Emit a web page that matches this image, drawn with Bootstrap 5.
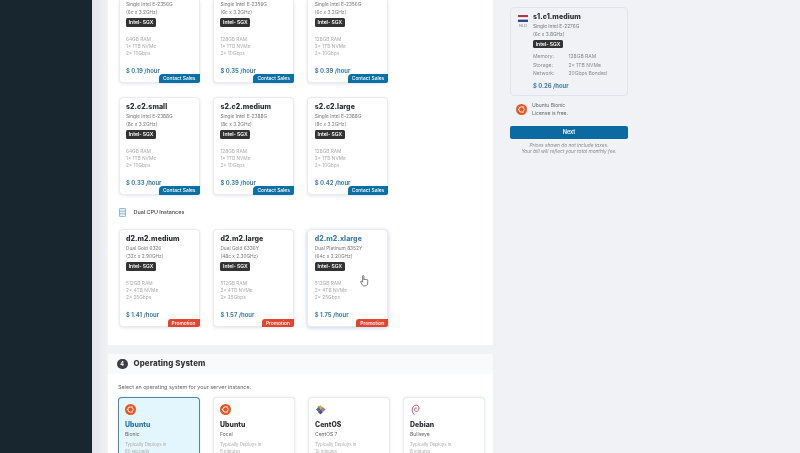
<!DOCTYPE html>
<html lang="en">
<head>
    <meta charset="UTF-8">
    <meta name="viewport" content="width=device-width, initial-scale=1.0">
    <title>Deploy Server</title>
    <link href="https://cdn.jsdelivr.net/npm/bootstrap@5.3.2/dist/css/bootstrap.min.css" rel="stylesheet">
    <style>
        html, body { height: 453px; overflow: hidden; }
        body { background: #f0f2f6; font-family: Inter, "Liberation Sans", sans-serif; font-size: 5px; color: #666; }
        .page-wrap { height: 453px; filter: blur(.45px); }
        .side-bar { width: 92px; background: #17262f; }
        .main-col { width: 401px; padding-left: 16px; background: linear-gradient(90deg, #e3e5ea, #f0f2f6 16px); }
        .white-panel { background: #fff; padding: 0 0 18px 10.5px; }
        .plan-grid { display: grid; grid-template-columns: repeat(3, 81px); column-gap: 13.4px; }
        .plan-grid-next { margin-top: 14px; }
        .plan-box { position: relative; height: 98px; padding: 4px 6.5px 0; background: #fff; border: 1px solid #e9ebef; border-radius: 4px; box-shadow: 0 1px 3px rgba(40, 50, 70, .12); }
        .plan-box.cut-top { height: 83px; padding-top: 0; border-top: 0; border-radius: 0 0 4px 4px; }
        .plan-box.hovered { box-shadow: 0 1px 4px rgba(40, 90, 170, .28); }
        .plan-box.hovered .plan-name { color: #3f7ea3; }
        .plan-name { font-size: 7px; font-weight: 800; line-height: 10px; color: #2b2d30; letter-spacing: .05px; white-space: nowrap; }
        .cpu-line { font-size: 4.8px; line-height: 8px; color: #777; white-space: nowrap; }
        .sgx-tag { display: block; width: 30px; height: 8.5px; padding: 0; margin-top: 2px; background: #333; border-radius: 1.5px; color: #fff; font-size: 5px; font-weight: 600; line-height: 8.5px; }
        .spec-list { margin-top: 9px; font-size: 4.8px; line-height: 7px; color: #aaa; white-space: nowrap; }
        .price-line { margin-top: 9px; font-size: 5.9px; font-weight: 700; line-height: 10px; color: #3f7ea3; white-space: nowrap; }
        .corner-tag { position: absolute; right: -1px; bottom: -1px; height: 9px; padding: 0 4px; border-radius: 4px 0 2px 0; color: #fff; font-size: 4.9px; font-weight: 500; line-height: 9px; }
        .tag-sales { width: 40.5px; background: #0a6fa5; }
        .tag-promo { width: 32px; height: 8px; line-height: 8px; background: #e0452f; border-radius: 3px 0 2px 0; }
        .group-head { height: 9px; margin: 12.5px 0 12.5px; font-size: 5.4px; font-weight: 500; color: #444; line-height: 9px; }
        .hand-cursor { position: absolute; left: 52px; top: 45px; }
        .os-panel { margin-top: 9px; background: #fff; height: 99px; }
        .os-head { height: 20px; padding-left: 9px; background: #f8fafc; font-size: 7.9px; font-weight: 800; color: #333; letter-spacing: .1px; }
        .step-dot { width: 10.5px; height: 10.5px; margin-right: 6px; border-radius: 50%; background: #3c3f43; color: #fff; font-size: 5.5px; font-weight: 700; }
        .os-hint { margin: 8.5px 0 6.5px 10px; font-size: 5.4px; line-height: 8px; color: #666; }
        .os-grid { display: grid; grid-template-columns: repeat(4, 82px); column-gap: 13px; margin-left: 9.5px; }
        .os-box { height: 70px; padding: 6px 6.5px 0; background: #fff; border: 1px solid #e9ebef; border-bottom: 0; border-radius: 4px 4px 0 0; box-shadow: 0 0 3px rgba(40, 50, 70, .1); }
        .os-box.chosen { background: #e3f5fd; border: 1px solid #4a88a6; border-bottom: 0; }
        .os-box.chosen .os-name { color: #2b77a3; }
        .os-logo { display: block; width: 11px; height: 11px; }
        .os-name { margin-top: 4.5px; font-size: 6.9px; font-weight: 800; line-height: 10px; color: #2b2d30; letter-spacing: .05px; }
        .os-ver { font-size: 5px; line-height: 8px; color: #666; }
        .os-time { margin-top: 3.5px; font-size: 4.4px; line-height: 7px; color: #aaa; }
        .side-col { padding: 7px 0 0 17px; }
        .sum-wrap { width: 118px; }
        .sum-card { height: 89px; padding: 3.5px 0 0 7px; background: #f0f2f6; border: 1px solid #e1e4ea; border-radius: 4px; }
        .flag-col { width: 15px; padding-top: 3.5px; }
        .nl-flag { display: block; width: 10px; height: 7px; }
        .nl-code { width: 10px; margin-top: .5px; font-size: 4px; line-height: 6px; text-align: center; color: #888; }
        .sum-name { font-size: 7px; font-weight: 800; line-height: 10px; color: #2b2d30; letter-spacing: .05px; white-space: nowrap; }
        .sum-specs { margin-top: 4px; font-size: 5px; line-height: 8.5px; color: #888; white-space: nowrap; }
        .sum-key { display: inline-block; width: 35.5px; }
        .sum-price { margin-top: 3px; font-size: 5.9px; font-weight: 700; line-height: 10px; color: #3f7ea3; white-space: nowrap; }
        .lic-row { margin-top: 4.5px; padding-left: 6px; font-size: 5px; line-height: 8.5px; color: #666; }
        .lic-logo { width: 11px; height: 11px; margin-right: 5px; }
        .next-btn { display: block; width: 100%; height: 13.5px; margin-top: 8px; padding: 0; background: #0a6aa1; border: 0; border-radius: 2px; color: #fff; font-size: 5.6px; font-weight: 600; line-height: 13.5px; }
        .fine-print { margin-top: 2.5px; font-size: 4.8px; font-style: italic; line-height: 6.5px; color: #888; text-align: center; white-space: nowrap; }
    </style>
</head>
<body>
    <svg width="0" height="0" class="d-block">
        <symbol id="ubuntu" viewBox="0 0 22 22">
            <circle cx="11" cy="11" r="11" fill="#e95420"/>
            <circle cx="11" cy="11" r="5.4" fill="none" stroke="#fff" stroke-width="2"/>
            <circle cx="5" cy="11" r="1.9" fill="#fff" stroke="#e95420" stroke-width=".8"/>
            <circle cx="14" cy="5.8" r="1.9" fill="#fff" stroke="#e95420" stroke-width=".8"/>
            <circle cx="14" cy="16.2" r="1.9" fill="#fff" stroke="#e95420" stroke-width=".8"/>
        </symbol>
    </svg>
    <div class="page-wrap d-flex">
        <div class="side-bar flex-shrink-0"></div>
        <div class="main-col flex-shrink-0">
            <div class="white-panel">
                <div class="plan-grid">
                    <div class="plan-box cut-top">
                        <div class="cpu-line">Single Intel E-2356G</div>
                        <div class="cpu-line">(6c x 3.2GHz)</div>
                        <span class="badge sgx-tag">Intel- SGX</span>
                        <div class="spec-list">64GB RAM<br>1x 1TB NVMe<br>2x 10Gbps</div>
                        <div class="price-line">$ 0.19 /hour</div>
                        <span class="badge corner-tag tag-sales">Contact Sales</span>
                    </div>
                    <div class="plan-box cut-top">
                        <div class="cpu-line">Single Intel E-2356G</div>
                        <div class="cpu-line">(6c x 3.2GHz)</div>
                        <span class="badge sgx-tag">Intel- SGX</span>
                        <div class="spec-list">128GB RAM<br>1x 1TB NVMe<br>2x 10Gbps</div>
                        <div class="price-line">$ 0.35 /hour</div>
                        <span class="badge corner-tag tag-sales">Contact Sales</span>
                    </div>
                    <div class="plan-box cut-top">
                        <div class="cpu-line">Single Intel E-2356G</div>
                        <div class="cpu-line">(6c x 3.2GHz)</div>
                        <span class="badge sgx-tag">Intel- SGX</span>
                        <div class="spec-list">128GB RAM<br>2x 1TB NVMe<br>2x 10Gbps</div>
                        <div class="price-line">$ 0.39 /hour</div>
                        <span class="badge corner-tag tag-sales">Contact Sales</span>
                    </div>
                </div>
                <div class="plan-grid plan-grid-next">
                    <div class="plan-box">
                        <div class="plan-name">s2.c2.small</div>
                        <div class="cpu-line">Single Intel E-2388G</div>
                        <div class="cpu-line">(8c x 3.2GHz)</div>
                        <span class="badge sgx-tag">Intel- SGX</span>
                        <div class="spec-list">64GB RAM<br>1x 1TB NVMe<br>2x 10Gbps</div>
                        <div class="price-line">$ 0.33 /hour</div>
                        <span class="badge corner-tag tag-sales">Contact Sales</span>
                    </div>
                    <div class="plan-box">
                        <div class="plan-name">s2.c2.medium</div>
                        <div class="cpu-line">Single Intel E-2388G</div>
                        <div class="cpu-line">(8c x 3.2GHz)</div>
                        <span class="badge sgx-tag">Intel- SGX</span>
                        <div class="spec-list">128GB RAM<br>1x 1TB NVMe<br>2x 10Gbps</div>
                        <div class="price-line">$ 0.39 /hour</div>
                        <span class="badge corner-tag tag-sales">Contact Sales</span>
                    </div>
                    <div class="plan-box">
                        <div class="plan-name">s2.c2.large</div>
                        <div class="cpu-line">Single Intel E-2388G</div>
                        <div class="cpu-line">(8c x 3.2GHz)</div>
                        <span class="badge sgx-tag">Intel- SGX</span>
                        <div class="spec-list">128GB RAM<br>2x 1TB NVMe<br>2x 10Gbps</div>
                        <div class="price-line">$ 0.42 /hour</div>
                        <span class="badge corner-tag tag-sales">Contact Sales</span>
                    </div>
                </div>
                <div class="group-head d-flex align-items-center">
                    <svg width="7" height="9" viewBox="0 0 7 9" class="me-2 flex-shrink-0"><rect x=".4" y=".4" width="6.2" height="8.2" rx=".8" fill="#e6f1f8" stroke="#6fa5c6" stroke-width=".8"/><path d="M.5 3.2h6M.5 5.8h6" stroke="#6fa5c6" stroke-width=".7"/></svg>
                    Dual CPU Instances
                </div>
                <div class="plan-grid">
                    <div class="plan-box">
                        <div class="plan-name">d2.m2.medium</div>
                        <div class="cpu-line">Dual Gold 6326</div>
                        <div class="cpu-line">(32c x 2.90GHz)</div>
                        <span class="badge sgx-tag">Intel- SGX</span>
                        <div class="spec-list">512GB RAM<br>2x 4TB NVMe<br>2x 25Gbps</div>
                        <div class="price-line">$ 1.41 /hour</div>
                        <span class="badge corner-tag tag-promo">Promotion</span>
                    </div>
                    <div class="plan-box">
                        <div class="plan-name">d2.m2.large</div>
                        <div class="cpu-line">Dual Gold 6336Y</div>
                        <div class="cpu-line">(48c x 2.30GHz)</div>
                        <span class="badge sgx-tag">Intel- SGX</span>
                        <div class="spec-list">512GB RAM<br>2x 4TB NVMe<br>2x 25Gbps</div>
                        <div class="price-line">$ 1.57 /hour</div>
                        <span class="badge corner-tag tag-promo">Promotion</span>
                    </div>
                    <div class="plan-box hovered">
                        <div class="plan-name">d2.m2.xlarge</div>
                        <div class="cpu-line">Dual Platinum 8352Y</div>
                        <div class="cpu-line">(64c x 2.20GHz)</div>
                        <span class="badge sgx-tag">Intel- SGX</span>
                        <div class="spec-list">512GB RAM<br>2x 4TB NVMe<br>2x 25Gbps</div>
                        <div class="price-line">$ 1.75 /hour</div>
                        <span class="badge corner-tag tag-promo">Promotion</span>
                        <svg class="hand-cursor" width="9" height="12" viewBox="0 0 9 12"><path d="M2.6 1.2c0-.9 1.3-.9 1.3 0v3.6c.1-.7 1.2-.7 1.3 0 .1-.6 1.2-.6 1.3.1.2-.5 1.2-.4 1.2.3v2.7c0 1.5-.8 3-2.4 3H4.2C3 11 2.5 10.2 1.900 9.200L.7 7C.3 6.300 1.200 5.700 1.800 6.300l.8.9z" fill="#fff" stroke="#444" stroke-width=".7" stroke-linejoin="round"/></svg>
                    </div>
                </div>
            </div>
            <div class="os-panel">
                <div class="os-head d-flex align-items-center">
                    <span class="step-dot d-flex align-items-center justify-content-center">4</span>
                    Operating System
                </div>
                <div class="os-hint">Select an operating system for your server instance.</div>
                <div class="os-grid">
                    <div class="os-box chosen">
                        <svg class="os-logo"><use href="#ubuntu"/></svg>
                        <div class="os-name">Ubuntu</div>
                        <div class="os-ver">Bionic</div>
                        <div class="os-time">Typically Deploys in<br>60 seconds</div>
                    </div>
                    <div class="os-box">
                        <svg class="os-logo"><use href="#ubuntu"/></svg>
                        <div class="os-name">Ubuntu</div>
                        <div class="os-ver">Focal</div>
                        <div class="os-time">Typically Deploys in<br>6 minutes</div>
                    </div>
                    <div class="os-box">
                        <svg class="os-logo" viewBox="0 0 22 22">
                            <path d="M11 2l5 5-5 5-5-5z" fill="#d9b23c"/>
                            <path d="M21 11l-5 5-5-5 5-5z" fill="#8c7fa8"/>
                            <path d="M11 21l-5-5 5-5 5 5z" fill="#5c4b8f"/>
                            <path d="M2 11l5-5 4 5-4 5z" fill="#3f6c95"/>
                            <path d="M5 6l3-2 2 3-3 2z" fill="#6f9a3a"/>
                        </svg>
                        <div class="os-name">CentOS</div>
                        <div class="os-ver">CentOS 7</div>
                        <div class="os-time">Typically Deploys in<br>10 minutes</div>
                    </div>
                    <div class="os-box">
                        <svg class="os-logo" viewBox="0 0 22 22"><path d="M8 21C4 17 3 11 6 6c3-4 9-5 11-1 2 3 1 8-2 9-3 2-6 0-6-3 0-2 2-4 4-3" fill="none" stroke="#c8305f" stroke-width="1.7" stroke-linecap="round"/></svg>
                        <div class="os-name">Debian</div>
                        <div class="os-ver">Bullseye</div>
                        <div class="os-time">Typically Deploys in<br>8 minutes</div>
                    </div>
                </div>
            </div>
        </div>
        <div class="side-col">
            <div class="sum-wrap">
                <div class="sum-card d-flex">
                    <div class="flag-col flex-shrink-0">
                        <svg class="nl-flag" viewBox="0 0 10 7"><rect width="10" height="2.4" fill="#b5354a"/><rect y="2.4" width="10" height="2.2" fill="#fff"/><rect y="4.6" width="10" height="2.4" fill="#2f4a8c"/></svg>
                        <div class="nl-code">NLD</div>
                    </div>
                    <div>
                        <div class="sum-name">s1.c1.medium</div>
                        <div class="cpu-line">Single Intel E-2276G</div>
                        <div class="cpu-line">(6c x 3.8GHz)</div>
                        <span class="badge sgx-tag">Intel- SGX</span>
                        <div class="sum-specs">
                            <div><span class="sum-key">Memory:</span>128GB RAM</div>
                            <div><span class="sum-key">Storage:</span>2x 1TB NVMe</div>
                            <div><span class="sum-key">Network:</span>20Gbps Bonded</div>
                        </div>
                        <div class="sum-price">$ 0.26 /hour</div>
                    </div>
                </div>
                <div class="lic-row d-flex align-items-center">
                    <svg class="lic-logo flex-shrink-0"><use href="#ubuntu"/></svg>
                    <div>Ubuntu Bionic<br>License is free.</div>
                </div>
                <button type="button" class="btn next-btn">Next</button>
                <div class="fine-print">Prices shown do not include taxes.<br>Your bill will reflect your total monthly fee.</div>
            </div>
        </div>
    </div>
</body>
</html>
